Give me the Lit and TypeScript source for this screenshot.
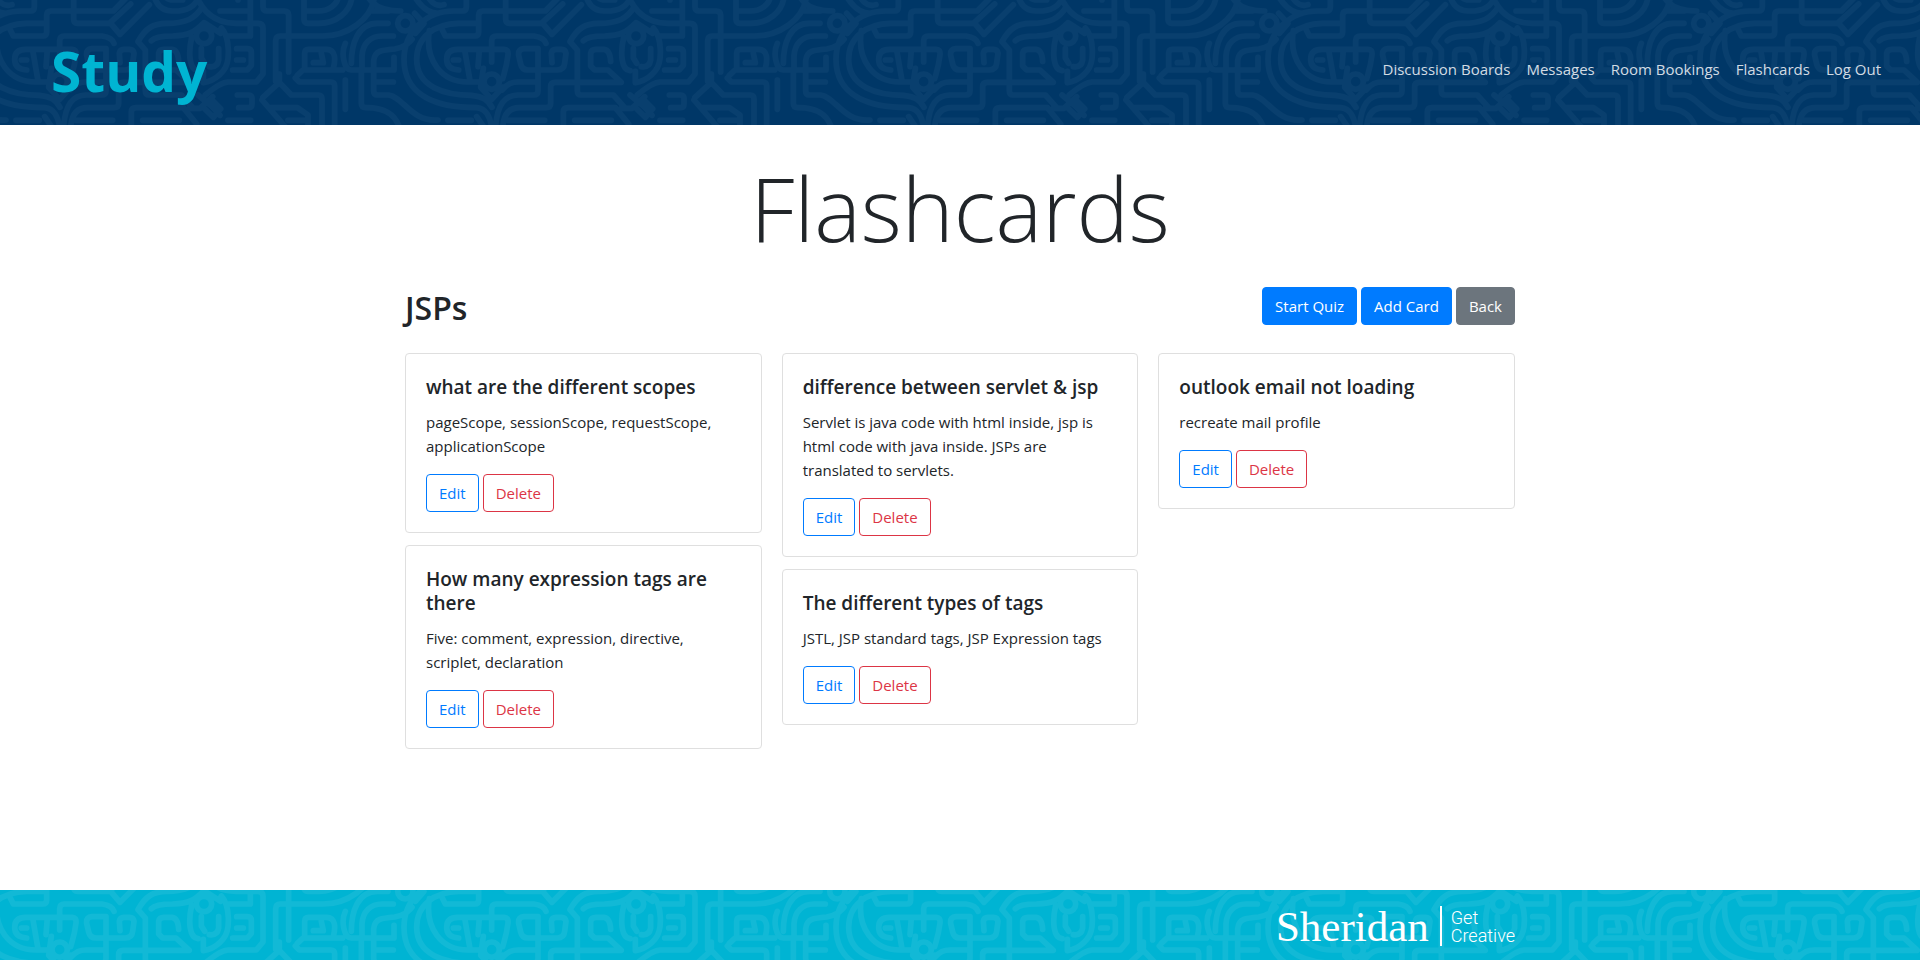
import { LitElement, html, css, unsafeCSS } from "lit";
import { customElement, property } from "lit/decorators.js";

interface Flashcard {
  question: string;
  answer: string;
}

const MAZE_LINES = [
  // left third
  "M127 -10V108H62", "M36 33H127", "M90 -5V0",
  "M-34 -10C-10 45 30 70 85 70H150Q165 70 165 85V222L145 246H60Q35 248 -8 285",
  "M86 146H118Q130 146 130 158V196L118 210H74", "M86 180H106",
  "M165 -10V20Q165 33 178 33H228Q242 33 242 46V216",
  "M203 244V122Q203 108 217 108H345C415 108 492 60 499 -10",
  "M288 -10V58Q288 70 300 70H332C385 70 427 36 432 -10",
  "M288 33H330C362 33 387 15 391 -10",
  "M165 292L214 247L250 285H330Q342 285 342 297V385",
  "M214 222V240", "M262 234L274 246H368Q380 246 380 258V390",
  "M268 226L285 210H404", "M290 205V160Q290 148 302 148H352C386 146 382 182 376 206",
  "M316 188H346L340 160", "M412 240V328",
  "M412 130C398 160 408 210 430 210H558V172",
  "M430 190C430 130 450 70 508 70H540",
  "M462 205V168C464 130 488 108 522 108H556",
  "M497 205V182C500 152 522 150 560 147C590 142 600 130 612 118",
  "M460 212V310Q460 323 474 323C540 323 568 350 578 395",
  "M497 212V273Q497 285 509 285H542C585 290 612 368 690 360",
  "M500 246H556", "M480 -10C495 18 530 33 578 33", "M540 33H495",
  "M-30 285L12 320L36 346M12 300L38 326L16 352L-10 326",
  "M88 285H122Q132 285 132 296V312Q132 323 122 323H92",
  "M162 300L236 385", "M188 323H268L300 345V385", "M60 361H128", "M240 361H300",
  // middle third
  "M620 -10C640 22 660 40 690 40", "M660 -10C672 12 690 20 708 14",
  "M775 -10V20Q775 33 763 33H738C655 33 588 95 588 178C588 290 690 323 806 323C835 326 846 350 852 385",
  "M810 70H752C680 72 626 110 626 178C626 262 712 285 790 286C826 290 840 300 852 322",
  "M664 92C650 180 700 246 780 246H812",
  "M700 84L712 108H800Q812 108 812 96V46Q812 33 825 33H932",
  "M893 -10V58Q893 70 905 70H1004L1032 103L1120 14",
  "M935 33H1012L1048 -4", "M1000 70L1064 12",
  "M752 210Q716 208 716 178Q716 148 750 148H888Q902 148 900 165C896 200 890 215 884 236",
  "M770 150L786 242", "M736 180H752", "M814 150L810 200", "M851 186V122Q851 108 865 108H978Q1008 112 1014 130",
  "M990 146H948Q930 148 932 166L938 192Q942 210 960 210H1048Q1068 210 1070 190L1074 160Q1072 148 1060 148H1044Q1032 148 1030 160L1032 188",
  "M990 146V272Q990 285 976 285H930C890 286 868 312 862 385",
  "M882 270C900 250 912 246 930 246H988",
  "M884 385C886 340 905 323 935 323H1014Q1028 323 1028 310V260Q1028 247 1042 247H1240L1200 210H1160L1148 198V160Q1150 148 1164 148H1188Q1206 150 1208 184",
  "M806 350L830 385", "M900 361H1010", "M720 361H790",
  // right third
  "M1108 246V272Q1108 285 1120 285H1216L1252 325",
  "M1108 246V150L1086 125C1108 85 1132 70 1172 70C1230 70 1258 55 1278 22",
  "M1126 122C1138 110 1160 108 1190 108C1240 106 1256 96 1284 68L1334 100",
  "M1136 -6Q1150 33 1190 33H1208C1246 30 1264 8 1266 -10",
  "M1168 -10Q1176 0 1192 0H1220",
  "M1066 390V336Q1066 323 1080 323H1222L1262 372", "M1100 361H1210",
  "M1247 112C1236 160 1240 210 1266 212", "M1276 146V174L1286 190",
  "M1328 146V180Q1324 203 1300 200",
  "M1336 84C1362 112 1364 186 1342 212Q1318 242 1282 248V214",
  "M1240 325H1272L1310 290",
].join("");

function mazeTile(ground: string, line: string) {
  const body = `<g id="m"><path d="${MAZE_LINES}"/><circle cx="592" cy="70" r="23"/><circle cx="851" cy="245" r="23"/><path d="M826 205L818 262L851 298L884 262M620 40L648 70L622 100"/><circle cx="1284" cy="108" r="23"/></g>`;
  const svg = `<svg xmlns="http://www.w3.org/2000/svg" width="432" height="125" viewBox="0 0 1296 375"><rect width="1296" height="375" fill="${ground}"/><g fill="none" stroke="${line}" stroke-width="17" stroke-linejoin="round" stroke-linecap="round">${body}<use href="#m" x="-1296"/><use href="#m" x="1296"/></g></svg>`;
  return unsafeCSS(`url("data:image/svg+xml,${encodeURIComponent(svg)}")`);
}

const base = css`
  *, *::before, *::after { box-sizing: border-box; }
  h1, h2, h3, p { margin: 0; }
  .btn {
    font: inherit;
    line-height: 24px;
    padding: 6px 12px;
    border: 1px solid transparent;
    border-radius: 4px;
    background: transparent;
    cursor: pointer;
  }
`;

@customElement("flash-card")
class FlashCard extends LitElement {
  @property({ attribute: false }) card!: Flashcard;

  static styles = [base, css`
    :host { display: block; break-inside: avoid; padding-bottom: 12px; }
    .card { border: 1px solid #dfdfdf; border-radius: 4px; padding: 21px 20px 20px; background: #fff; }
    .question { font-size: 19px; line-height: 24px; font-weight: 600; margin-bottom: 11px; }
    .answer { line-height: 24px; margin-bottom: 16px; }
    .actions { display: flex; gap: 4px; }
    .edit { color: #007bff; border-color: #007bff; }
    .delete { color: #dc3545; border-color: #dc3545; }
  `];

  render() {
    return html`
      <article class="card">
        <h3 class="question">${this.card.question}</h3>
        <p class="answer">${this.card.answer}</p>
        <div class="actions">
          <button class="btn edit" type="button">Edit</button>
          <button class="btn delete" type="button">Delete</button>
        </div>
      </article>`;
  }
}

@customElement("app-root")
class AppRoot extends LitElement {
  private links = ["Discussion Boards", "Messages", "Room Bookings", "Flashcards", "Log Out"];

  private cards: Flashcard[] = [
    { question: "what are the different scopes", answer: "pageScope, sessionScope, requestScope, applicationScope" },
    { question: "How many expression tags are there", answer: "Five: comment, expression, directive, scriplet, declaration" },
    { question: "difference between servlet & jsp", answer: "Servlet is java code with html inside, jsp is html code with java inside. JSPs are translated to servlets." },
    { question: "The different types of tags", answer: "JSTL, JSP standard tags, JSP Expression tags" },
    { question: "outlook email not loading", answer: "recreate mail profile" },
  ];

  static styles = [base, css`
    :host {
      display: flex;
      flex-direction: column;
      min-height: 100vh;
      background: #fff;
      color: #212529;
      font-family: "Segoe UI", "Open Sans", "Noto Sans", sans-serif;
      font-size: 15px;
      line-height: 24px;
    }
    .header {
      display: flex;
      align-items: center;
      justify-content: space-between;
      flex-wrap: wrap;
      min-height: 125px;
      padding: 16px 39px 0 51px;
      background: #003767 ${mazeTile("#003767", "#093f6e")} 208px 0 repeat-x;
    }
    .brand { color: #00b4d2; font-size: 55px; line-height: 72px; font-weight: 700; text-decoration: none; }
    .nav { display: flex; flex-wrap: wrap; gap: 16px; padding-bottom: 4px; }
    .link { color: #d2dbe3; text-decoration: none; }
    .main { flex: 1; }
    .container { width: 100%; max-width: 1140px; margin: 0 auto; padding: 0 15px; }
    .title { padding-top: 26px; text-align: center; font-size: 88px; line-height: 115px; font-weight: 300; }
    .toolbar { display: flex; align-items: center; justify-content: space-between; padding: 19px 0 26px; }
    .deck { padding-top: 4px; font-size: 32px; line-height: 38px; font-weight: 600; }
    .tools { display: flex; gap: 4px; }
    .primary { color: #fff; background: #007bff; border-color: #007bff; }
    .secondary { color: #fff; background: #6c757d; border-color: #6c757d; }
    .cards { columns: 3; column-gap: 20px; }
    .footer {
      min-height: 70px;
      display: flex;
      align-items: center;
      padding-top: 2px;
      background: #00b4d3 ${mazeTile("#00b4d3", "#12b9d6")} 208px -22px repeat;
    }
    .logo { display: flex; justify-content: flex-end; align-items: center; gap: 11px; color: #fff; }
    .word { padding-top: 2px; font-family: "Liberation Serif", serif; font-size: 43px; line-height: 40px; }
    .motto {
      border-left: 2px solid #fff;
      padding: 3px 0 1px 9px;
      font-family: Roboto, sans-serif;
      font-size: 18px;
      line-height: 18px;
      font-weight: 300;
    }
    .motto span { display: block; }
  `];

  render() {
    return html`
      <header class="header">
        <a class="brand" href="#">Study</a>
        <nav class="nav">${this.links.map((l) => html`<a class="link" href="#">${l}</a>`)}</nav>
      </header>
      <main class="main">
        <div class="container">
          <h1 class="title">Flashcards</h1>
          <div class="toolbar">
            <h2 class="deck">JSPs</h2>
            <div class="tools">
              <button class="btn primary" type="button">Start Quiz</button>
              <button class="btn primary" type="button">Add Card</button>
              <button class="btn secondary" type="button">Back</button>
            </div>
          </div>
          <div class="cards">${this.cards.map((c) => html`<flash-card .card=${c}></flash-card>`)}</div>
        </div>
      </main>
      <footer class="footer">
        <div class="container logo">
          <span class="word">Sheridan</span>
          <span class="motto"><span>Get</span><span>Creative</span></span>
        </div>
      </footer>`;
  }
}
